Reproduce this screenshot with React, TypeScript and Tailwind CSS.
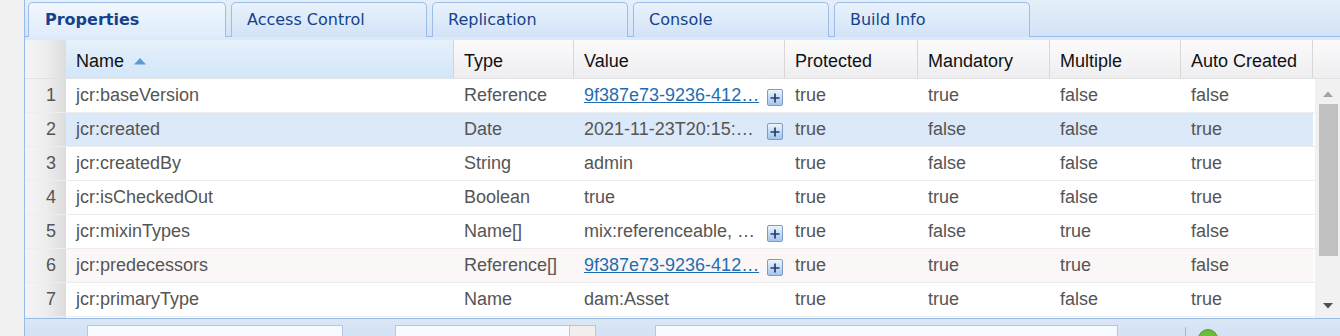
import React from 'react'

type Row = {
  name: string
  type: string
  value: string
  link?: boolean
  more?: boolean
  prot: string
  mand: string
  mult: string
  auto: string
}

const rows: Row[] = [
  { name: 'jcr:baseVersion', type: 'Reference', value: '9f387e73-9236-412…', link: true, more: true, prot: 'true', mand: 'true', mult: 'false', auto: 'false' },
  { name: 'jcr:created', type: 'Date', value: '2021-11-23T20:15:…', more: true, prot: 'true', mand: 'false', mult: 'false', auto: 'true' },
  { name: 'jcr:createdBy', type: 'String', value: 'admin', prot: 'true', mand: 'false', mult: 'false', auto: 'true' },
  { name: 'jcr:isCheckedOut', type: 'Boolean', value: 'true', prot: 'true', mand: 'true', mult: 'false', auto: 'true' },
  { name: 'jcr:mixinTypes', type: 'Name[]', value: 'mix:referenceable, …', more: true, prot: 'true', mand: 'false', mult: 'true', auto: 'false' },
  { name: 'jcr:predecessors', type: 'Reference[]', value: '9f387e73-9236-412…', link: true, more: true, prot: 'true', mand: 'true', mult: 'true', auto: 'false' },
  { name: 'jcr:primaryType', type: 'Name', value: 'dam:Asset', prot: 'true', mand: 'true', mult: 'false', auto: 'true' },
]

const tabs = ['Properties', 'Access Control', 'Replication', 'Console', 'Build Info']

function PlusBox() {
  return (
    <svg width="16" height="17" viewBox="0 0 16 17" className="shrink-0 mt-[3px]">
      <defs>
        <linearGradient id="pb" x1="0" y1="0" x2="0" y2="1">
          <stop offset="0" stopColor="#f0f6fd" />
          <stop offset="1" stopColor="#a4c3e8" />
        </linearGradient>
      </defs>
      <rect x="0.5" y="0.5" width="15" height="16" rx="1.5" fill="url(#pb)" stroke="#7b9cc6" />
      <path d="M3.5 9h9M8 4.5v9" stroke="#1d3f73" strokeWidth="1.7" />
    </svg>
  )
}

function Cell({ w, children, className = '' }: { w: string; children: React.ReactNode; className?: string }) {
  return <div className={`${w} shrink-0 pl-[10px] flex items-center overflow-hidden whitespace-nowrap ${className}`}>{children}</div>
}

export default function App() {
  return (
    <div className="w-[1340px] h-[336px] overflow-hidden flex bg-[#f0f0f0] font-['Liberation_Sans',Arial,sans-serif]">
      <div className="w-[24px] shrink-0 bg-[#f1f1f1]" />
      <div className="flex-1 flex flex-col border-l border-[#99bbe8] bg-white min-w-0">
        {/* Tab strip */}
        <div className="h-[37px] shrink-0 flex items-end gap-[5px] pl-[3px] bg-linear-to-b from-[#e6eff9] to-[#d3e3f6] border-b border-[#99bbe8]">
          {tabs.map((t, i) => (
            <div
              key={t}
              className={`h-[35px] -mb-px rounded-t-[5px] border border-b-0 border-[#9cbde6] flex items-center text-[16px] font-['DejaVu_Sans',Tahoma,sans-serif] text-[#15428b] ${
                i === 0
                  ? 'w-[198px] pl-[16px] font-bold bg-linear-to-b from-[#f1f7fe] to-[#dfecfb]'
                  : 'w-[196px] pl-[15px] bg-linear-to-b from-[#e9f2fc] to-[#d2e3f7]'
              }`}
            >
              {t}
            </div>
          ))}
        </div>
        <div className="h-[3px] shrink-0 bg-[#dce9f8]" />

        {/* Header */}
        <div className="h-[39px] shrink-0 flex text-[18px] text-[#111] border-b border-[#e2e2e2]">
          <div className="w-[41px] shrink-0 bg-linear-to-r from-[#f4f4f4] via-[#eeeeee] to-[#dcdcdc]" />
          <Cell w="w-[388px]" className="pt-[5px] bg-linear-to-b from-[#e6f1fb] to-[#d3e6f8] border-r border-[#d8d2d2]">
            Name
            <svg width="14" height="8" viewBox="0 0 14 8" className="ml-[9px] mb-[1px]">
              <path d="M1 7.5L7 1l6 6.5z" fill="#5b9bd8" />
            </svg>
          </Cell>
          <Cell w="w-[120px]" className="pt-[5px] bg-linear-to-b from-[#fbfbfc] to-[#eeeef1] border-r border-[#ddd5d5]">Type</Cell>
          <Cell w="w-[211px]" className="pt-[5px] bg-linear-to-b from-[#fbfbfc] to-[#eeeef1] border-r border-[#ddd5d5]">Value</Cell>
          <Cell w="w-[133px]" className="pt-[5px] bg-linear-to-b from-[#fbfbfc] to-[#eeeef1] border-r border-[#ddd5d5]">Protected</Cell>
          <Cell w="w-[132px]" className="pt-[5px] bg-linear-to-b from-[#fbfbfc] to-[#eeeef1] border-r border-[#ddd5d5]">Mandatory</Cell>
          <Cell w="w-[131px]" className="pt-[5px] bg-linear-to-b from-[#fbfbfc] to-[#eeeef1] border-r border-[#ddd5d5]">Multiple</Cell>
          <Cell w="w-[132px]" className="pt-[5px] bg-linear-to-b from-[#fbfbfc] to-[#eeeef1] border-r border-[#ddd5d5]">Auto Created</Cell>
          <div className="flex-1 bg-linear-to-b from-[#fbfbfc] to-[#eeeef1]" />
        </div>

        {/* Body */}
        <div className="flex h-[239px] shrink-0">
          <div className="w-[1290px] shrink-0 flex flex-col">
            {rows.map((r, i) => (
              <div
                key={r.name}
                className={`h-[34px] shrink-0 flex text-[18px] text-[#555] border-b border-[#ededed] ${
                  i === 1 ? 'bg-[#dce9f8]' : i === 5 ? 'bg-[#fbf7f7]' : 'bg-white'
                }`}
              >
                <div className="w-[41px] shrink-0 flex items-center justify-end pr-[10px] bg-linear-to-r from-[#f4f4f4] via-[#eeeeee] to-[#dcdcdc]">
                  {i + 1}
                </div>
                <Cell w="w-[388px]">{r.name}</Cell>
                <Cell w="w-[120px]">{r.type}</Cell>
                <Cell w="w-[211px]" className="pr-[2px] justify-between">
                  <span className={r.link ? 'text-[#1f6db0] underline' : ''}>{r.value}</span>
                  {r.more && <PlusBox />}
                </Cell>
                <Cell w="w-[133px]">{r.prot}</Cell>
                <Cell w="w-[132px]">{r.mand}</Cell>
                <Cell w="w-[131px]">{r.mult}</Cell>
                <Cell w="w-[132px]">{r.auto}</Cell>
                <div className="flex-1 bg-white" />
              </div>
            ))}
            <div className="flex-1 flex">
              <div className="w-[41px] bg-linear-to-r from-[#f4f4f4] via-[#eeeeee] to-[#dcdcdc]" />
            </div>
          </div>
          {/* Scrollbar */}
          <div className="flex-1 bg-[#f1f1f1] flex flex-col items-center">
            <svg width="12" height="8" viewBox="0 0 12 8" className="mt-[11px]">
              <path d="M1 7L6 1.5 11 7z" fill="#a3a3a3" />
            </svg>
            <div className="mt-[6px] w-[19px] h-[152px] bg-[#c1c1c1] ml-[2px]" />
            <div className="flex-1" />
            <svg width="12" height="8" viewBox="0 0 12 8" className="mb-[8px]">
              <path d="M1 1L6 6.5 11 1z" fill="#505050" />
            </svg>
          </div>
        </div>

        {/* Bottom toolbar */}
        <div className="flex-1 border-t border-[#99bbe8] bg-linear-to-b from-[#dae7f6] to-[#cddef3] flex items-start pt-[6px]">
          <div className="ml-[62px] w-[256px] h-[24px] bg-[#f7fbff] border border-[#b7c6da]" />
          <div className="ml-[52px] w-[201px] h-[24px] flex border border-[#b7c6da] bg-[#f7fbff]">
            <div className="flex-1" />
            <div className="w-[26px] bg-[#f3eeee] border-l border-[#c9c2c2]" />
          </div>
          <div className="ml-[59px] w-[463px] h-[24px] bg-[#f7fbff] border border-[#b7c6da]" />
          <div className="ml-[67px] mt-[2px] w-px h-[20px] bg-[#9fb8d8]" />
          <div className="ml-[12px] mt-[4px] w-[20px] h-[20px] rounded-full bg-[#6cbb3c] border border-[#4c9a22]" />
        </div>
      </div>
    </div>
  )
}
